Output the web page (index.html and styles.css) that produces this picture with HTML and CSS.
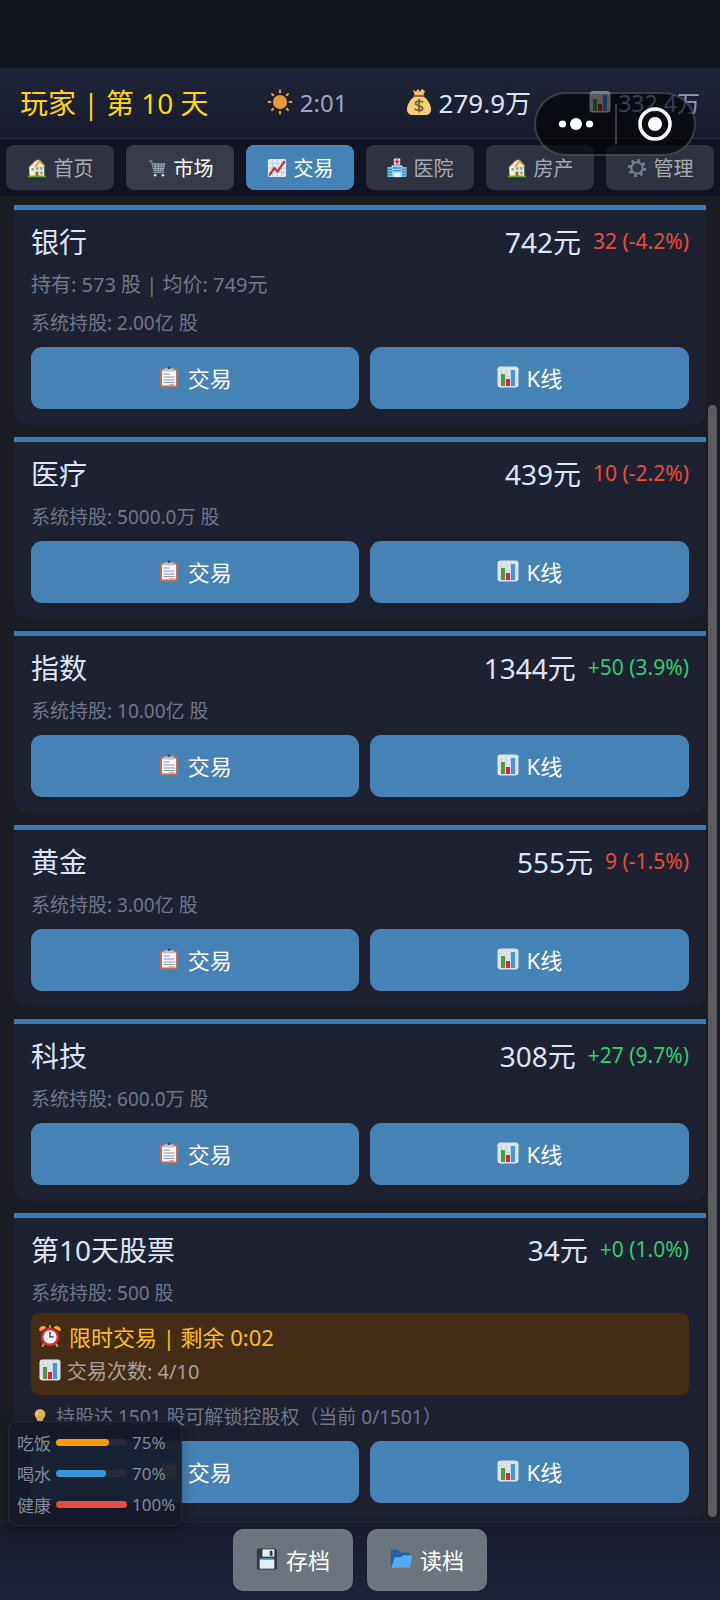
FILE: index.html
```html
<!DOCTYPE html>
<html lang="zh-CN">
<head>
<meta charset="utf-8">
<meta name="viewport" content="width=device-width, initial-scale=1">
<title>交易</title>
<link rel="stylesheet" href="styles.css">
</head>
<body>

<!-- icon sprite -->
<svg class="sprite" aria-hidden="true">
  <symbol id="i-sun" viewBox="0 0 26 26">
    <circle cx="13" cy="13" r="7" fill="#e59a35"/>
    <g stroke="#e59a35" stroke-width="2" stroke-linecap="round">
      <path d="M13 1.500v2M13 22.500v2M1.500 13h2M22.500 13h2M5 5l1.300 1.300M19.700 19.700l1.300 1.300M5 21l1.300-1.300M19.700 6.300L21 5"/>
    </g>
  </symbol>
  <symbol id="i-bag" viewBox="0 0 26 28">
    <path d="M7 2l3 1.500L12 1l2 2.500L16 1l3 2-2 5H9z" fill="#f2c063"/>
    <path d="M9 8h8c4 3 8 8 8 13 0 4-2 6-6 6H7c-4 0-6-2-6-6C1 16 5 11 9 8z" fill="#f7cf78"/>
    <path d="M8.500 8h9" stroke="#a8622c" stroke-width="2" stroke-linecap="round"/>
    <path d="M17 14.500c-1-1.500-7-2.500-7.500.6-.3 3.400 7.500 2 7.200 5.300-.3 3-6.700 2.500-7.900.4M13 11v13.500" fill="none" stroke="#70613c" stroke-width="1.800"/>
  </symbol>
  <symbol id="i-bars" viewBox="0 0 22 22">
    <rect x=".5" y=".5" width="21" height="21" rx="3" fill="#dfe6ea"/>
    <path d="M4.500 1v20M9 1v20M13.500 1v20M18 1v20M1 6h20M1 11h20M1 16h20" stroke="#c2d0d8" stroke-width=".7"/>
    <rect x="4" y="8" width="4" height="12" fill="#4f9a3c"/>
    <rect x="9" y="13" width="4" height="7" fill="#d8263f"/>
    <rect x="14" y="4" width="4" height="16" fill="#4794dc"/>
  </symbol>
  <symbol id="i-chart" viewBox="0 0 22 22">
    <rect x="1" y="1" width="20" height="20" rx="2" fill="#e4ebf0"/>
    <path d="M6 1v20M11 1v20M16 1v20M1 6h20M1 11h20M1 16h20" stroke="#b9c9d6" stroke-width=".8"/>
    <path d="M3 18.500l5-7.500 3.500 4L19 4" fill="none" stroke="#d8263f" stroke-width="2.400" stroke-linejoin="round" stroke-linecap="round"/>
  </symbol>
  <symbol id="i-house" viewBox="0 0 22 22">
    <path d="M3 10l9-8.500L19 9v11H3z" fill="#f8e7b0"/>
    <path d="M2.500 10.500L10 3l2 1.500L7 11v9H3z" fill="#fff3cc"/>
    <path d="M8.500 10L14 2.800l5.500 6" fill="none" stroke="#d39746" stroke-width="1.500"/>
    <path d="M2 10.500L9.500 3" stroke="#cfa362" stroke-width="1.200"/>
    <rect x="5" y="11" width="2.500" height="3" fill="#62aecb"/>
    <rect x="10" y="10" width="2.500" height="3" fill="#62aecb"/>
    <rect x="14.500" y="10" width="2.500" height="3" fill="#62aecb"/>
    <rect x="14.500" y="15" width="2.500" height="3" fill="#62aecb"/>
    <rect x="9.500" y="15" width="3" height="5" fill="#9a6b3c"/>
    <path d="M1 20.300h20" stroke="#6d9c3c" stroke-width="1.800"/>
  </symbol>
  <symbol id="i-cart" viewBox="0 0 22 22">
    <path d="M2 3.500h3L8 16h11" fill="none" stroke="#8494a0" stroke-width="1.500"/>
    <path d="M5.500 6H20l-2 8H7.500z" fill="#4a5966"/>
    <path d="M5.500 6.500H20M6 9h13.500M6.500 11.500H19M8 14h10.500M9 6l.8 8M12.500 6v8M16 6l-.8 8M19.500 6l-2 8" stroke="#a8b6c0" stroke-width=".9"/>
    <circle cx="9" cy="19" r="1.400" fill="#dfe5ea"/>
    <circle cx="17.500" cy="19" r="1.400" fill="#dfe5ea"/>
  </symbol>
  <symbol id="i-hospital" viewBox="0 0 22 22">
    <path d="M5 8h12v13H5z" fill="#a9dcf5"/>
    <path d="M.5 10H6v11H.5zM16 10h5.500v11H16z" fill="#7cc0ea"/>
    <path d="M1 12.500h4.500M1 15.500h4.500M1 18.500h4.500M16.500 12.500H21M16.500 15.500H21M16.500 18.500H21M6.500 11h9M6.500 14h9" stroke="#3b87c4" stroke-width="1.400"/>
    <rect x="8" y="16.500" width="6" height="4.500" fill="#e9f4fa"/>
    <rect x="7.500" y=".5" width="7" height="7" rx="1" fill="#e8e5ea"/>
    <path d="M11 1.500v5M8.500 4h5" stroke="#d12f45" stroke-width="1.800"/>
  </symbol>
  <symbol id="i-gear" viewBox="0 0 22 22">
    <circle cx="11" cy="11" r="8.500" fill="none" stroke="#71808c" stroke-width="3" stroke-dasharray="3.200 3.475"/>
    <circle cx="11" cy="11" r="6.300" fill="none" stroke="#71808c" stroke-width="2.400"/>
  </symbol>
  <symbol id="i-clip" viewBox="0 0 22 22">
    <rect x="2" y="2.500" width="18" height="19" rx="2" fill="#bf6f58"/>
    <path d="M4 4.500h14v15H4z" fill="#f5f5f8"/>
    <path d="M6 2.500h3.500a1.600 1.600 0 0 1 3 0H16v3H6z" fill="#b4c3cf"/>
    <path d="M11 .5v2.500" stroke="#39424c" stroke-width="1.800"/>
    <path d="M5.500 8h6M5.500 11h11M5.500 14h11M5.500 16.500h11" stroke="#8a9cad" stroke-width="1"/>
    <path d="M11 18.700h5" stroke="#d98e78" stroke-width="1"/>
  </symbol>
  <symbol id="i-alarm" viewBox="0 0 24 24">
    <path d="M1 7a4 4 0 0 1 7-4zM23 7a4 4 0 0 0-7-4z" fill="#eca83c"/>
    <path d="M6 20l-2 3M18 20l2 3M12 1v3" stroke="#d9a05a" stroke-width="2" stroke-linecap="round"/>
    <circle cx="12" cy="13" r="10" fill="#d42a3d"/>
    <circle cx="12" cy="13" r="7.300" fill="#f6f2f2"/>
    <path d="M12 7.500V13h4" fill="none" stroke="#333" stroke-width="1.500"/>
  </symbol>
  <symbol id="i-bulb" viewBox="0 0 20 20">
    <path d="M10 1a6 6 0 0 0-6 6c0 3 3 5 3.200 8h5.600C13 12 16 10 16 7a6 6 0 0 0-6-6z" fill="#dcb25a"/>
    <path d="M8 5c-1.500 1-1.500 2-1.200 3.500" stroke="#f2dc9a" stroke-width="1.500" fill="none"/>
    <path d="M7.500 15.500h5v2.500l-1.500 1.500H9L7.500 18z" fill="#7a7d86"/>
  </symbol>
  <symbol id="i-disk" viewBox="0 0 24 24">
    <path d="M2 .5h19l2 2V22a1.500 1.500 0 0 1-1.500 1.500h-19A1.500 1.500 0 0 1 1 22V1.500z" fill="#303840"/>
    <rect x="7" y="1.500" width="13" height="8" fill="#e3e9ee"/>
    <rect x="15" y="3" width="3" height="5.500" rx="1" fill="#303840"/>
    <rect x="4" y="12.500" width="16" height="10" fill="#e6eef6"/>
    <path d="M4 12h16" stroke="#50a4e6" stroke-width="1.800"/>
  </symbol>
  <symbol id="i-folder" viewBox="0 0 24 24">
    <path d="M1 3.500Q1 2 2.500 2H8l3.500 3H20q2 0 2 2v4L2 21H1z" fill="#1f669f"/>
    <path d="M4.500 11.500Q5 10 6.500 10H11l4-2h7.500q1.500 0 1.300 1.500l-1.300 10q-.3 2-2 2H1.500z" fill="#55a9f0"/>
  </symbol>
</svg>

<div class="app">
  <div class="statusbar"></div>

  <header class="header">
    <h1 class="player">玩家 | 第 10 天</h1>
    <div class="stat time"><svg class="icon big"><use href="#i-sun"/></svg>2:01</div>
    <div class="stat money"><svg class="icon big"><use href="#i-bag"/></svg>279.9万</div>
    <div class="stat total"><svg class="icon"><use href="#i-bars"/></svg>332.4万</div>
  </header>

  <nav class="tabs">
    <button class="tab"><svg class="icon"><use href="#i-house"/></svg>首页</button>
    <button class="tab lit"><svg class="icon"><use href="#i-cart"/></svg>市场</button>
    <button class="tab active"><svg class="icon"><use href="#i-chart"/></svg>交易</button>
    <button class="tab"><svg class="icon"><use href="#i-hospital"/></svg>医院</button>
    <button class="tab"><svg class="icon"><use href="#i-house"/></svg>房产</button>
    <button class="tab"><svg class="icon"><use href="#i-gear"/></svg>管理</button>
  </nav>

  <main class="list">
    <section class="card">
      <div class="top"><h2>银行</h2><span class="price">742元</span><span class="change down">32 (-4.2%)</span></div>
      <p class="own">持有: 573 股 | 均价: 749元</p>
      <p class="sys">系统持股: 2.00亿 股</p>
      <div class="actions">
        <button class="btn"><svg class="icon"><use href="#i-clip"/></svg>交易</button>
        <button class="btn"><svg class="icon"><use href="#i-bars"/></svg>K线</button>
      </div>
    </section>

    <section class="card">
      <div class="top"><h2>医疗</h2><span class="price">439元</span><span class="change down">10 (-2.2%)</span></div>
      <p class="sys">系统持股: 5000.0万 股</p>
      <div class="actions">
        <button class="btn"><svg class="icon"><use href="#i-clip"/></svg>交易</button>
        <button class="btn"><svg class="icon"><use href="#i-bars"/></svg>K线</button>
      </div>
    </section>

    <section class="card">
      <div class="top"><h2>指数</h2><span class="price">1344元</span><span class="change up">+50 (3.9%)</span></div>
      <p class="sys">系统持股: 10.00亿 股</p>
      <div class="actions">
        <button class="btn"><svg class="icon"><use href="#i-clip"/></svg>交易</button>
        <button class="btn"><svg class="icon"><use href="#i-bars"/></svg>K线</button>
      </div>
    </section>

    <section class="card">
      <div class="top"><h2>黄金</h2><span class="price">555元</span><span class="change down">9 (-1.5%)</span></div>
      <p class="sys">系统持股: 3.00亿 股</p>
      <div class="actions">
        <button class="btn"><svg class="icon"><use href="#i-clip"/></svg>交易</button>
        <button class="btn"><svg class="icon"><use href="#i-bars"/></svg>K线</button>
      </div>
    </section>

    <section class="card">
      <div class="top"><h2>科技</h2><span class="price">308元</span><span class="change up">+27 (9.7%)</span></div>
      <p class="sys">系统持股: 600.0万 股</p>
      <div class="actions">
        <button class="btn"><svg class="icon"><use href="#i-clip"/></svg>交易</button>
        <button class="btn"><svg class="icon"><use href="#i-bars"/></svg>K线</button>
      </div>
    </section>

    <section class="card">
      <div class="top"><h2>第10天股票</h2><span class="price">34元</span><span class="change up">+0 (1.0%)</span></div>
      <p class="sys">系统持股: 500 股</p>
      <div class="limit">
        <p class="limit-time"><svg class="icon"><use href="#i-alarm"/></svg>限时交易 | 剩余 0:02</p>
        <p class="limit-count"><svg class="icon"><use href="#i-bars"/></svg>交易次数: 4/10</p>
      </div>
      <p class="hint"><svg class="icon"><use href="#i-bulb"/></svg>持股达 1501 股可解锁控股权（当前 0/1501）</p>
      <div class="actions">
        <button class="btn"><svg class="icon"><use href="#i-clip"/></svg>交易</button>
        <button class="btn"><svg class="icon"><use href="#i-bars"/></svg>K线</button>
      </div>
    </section>
    <div class="scrollbar"></div>
  </main>

  <footer class="footer">
    <button class="save"><svg class="icon"><use href="#i-disk"/></svg>存档</button>
    <button class="save"><svg class="icon"><use href="#i-folder"/></svg>读档</button>
  </footer>

  <!-- floating player needs -->
  <div class="needs">
    <div class="need"><span>吃饭</span><div class="bar"><div class="fill food" style="width:75%"></div></div><span>75%</span></div>
    <div class="need"><span>喝水</span><div class="bar"><div class="fill water" style="width:70%"></div></div><span>70%</span></div>
    <div class="need"><span>健康</span><div class="bar"><div class="fill health" style="width:100%"></div></div><span>100%</span></div>
  </div>

  <!-- mini program capsule -->
  <div class="capsule">
    <button class="cap-btn" aria-label="更多">
      <svg width="36" height="14" viewBox="0 0 36 14" fill="#fff"><circle cx="4.500" cy="7" r="3.600"/><circle cx="18" cy="7" r="6"/><circle cx="31.500" cy="7" r="3.600"/></svg>
    </button>
    <button class="cap-btn" aria-label="关闭">
      <svg width="36" height="36" viewBox="0 0 36 36"><circle cx="18" cy="18" r="15" fill="none" stroke="#fff" stroke-width="3.600"/><circle cx="18" cy="18" r="7" fill="#fff"/></svg>
    </button>
  </div>
</div>

</body>
</html>
```

FILE: styles.css
```css
* { box-sizing: border-box; }

body {
  margin: 0;
  background: #1c1c24;
  color: #dfe3f8;
  font-family: "Noto Sans", "Noto Sans CJK SC", sans-serif;
  font-size: 20px;
}

h1, h2, p { margin: 0; font-weight: normal; }

button {
  border: 0;
  padding: 0;
  font-family: inherit;
  color: #fff;
}

.sprite { position: absolute; width: 0; height: 0; }

.icon { width: 22px; height: 22px; flex: none; }
.icon.big { width: 26px; height: 28px; }

.app {
  position: relative;
  min-height: 100vh;
  display: flex;
  flex-direction: column;
}

.statusbar { height: 68px; background: #12161f; }

.header {
  display: flex;
  justify-content: space-between;
  align-items: center;
  height: 71px;
  padding: 0 20px 2px;
  background: linear-gradient(#1f2438, #181c2c);
  border-bottom: 1px solid #2a2e3c;
}
.player { font-size: 28px; color: #ffd60a; }
.stat { display: flex; align-items: center; gap: 7px; font-size: 24px; }
.time { color: #a0a4bc; }
.money { font-size: 26px; }
.total { font-size: 23px; color: #8e9ac0; }

.tabs {
  display: flex;
  gap: 12px;
  padding: 6px;
  background: #101423;
}
.tab {
  flex: 1;
  display: flex;
  align-items: center;
  justify-content: center;
  gap: 7px;
  height: 45px;
  border-radius: 8px;
  background: #2e3241;
  color: #a8a9ae;
  font-size: 20px;
}
.tab .icon { width: 20px; height: 20px; }
.tab.lit { background: #383b49; color: #fff; }
.tab.active { background: #4682b4; color: #fff; }

.list {
  position: relative;
  flex: 1;
  display: flex;
  flex-direction: column;
  gap: 12px;
  padding: 9px 14px 0;
}

.card {
  padding: 13px 17px 16px;
  border-top: 5px solid #3579b5;
  border-radius: 0 0 14px 14px;
  background: #1d2130;
}
.top {
  display: flex;
  align-items: center;
  height: 36px;
  margin-bottom: 11px;
}
.top h2 { flex: 1; font-size: 28px; }
.price { font-size: 28px; }
.change { margin-left: 12px; font-size: 21px; }
.up { color: #2ecc71; }
.down { color: #e74c3c; }

.own, .sys, .hint { line-height: 30px; color: #717688; }
.own { font-size: 20px; margin-bottom: 8px; }
.sys { font-size: 19px; margin-bottom: 9px; }

.actions { display: flex; gap: 11px; }
.btn {
  flex: 1 1 auto;
  display: flex;
  align-items: center;
  justify-content: center;
  gap: 8px;
  height: 62px;
  padding-bottom: 3px;
  border-radius: 11px;
  background: #4682b4;
  font-size: 22px;
}

.limit {
  margin: -4px 0 7px;
  padding: 6px 8px 8px;
  border-radius: 8px;
  background: #452d15;
}
.limit p { display: flex; align-items: center; gap: 8px; height: 34px; }
.limit .limit-time { font-size: 22px; color: #fbbf24; }
.limit .limit-count { gap: 6px; font-size: 20px; color: #a5a09e; }
.hint {
  display: flex;
  align-items: center;
  gap: 7px;
  margin-bottom: 9px;
  font-size: 19px;
}
.hint .icon { width: 18px; height: 18px; }

.scrollbar {
  position: absolute;
  top: 209px;
  right: 3px;
  bottom: 4px;
  width: 9px;
  border-radius: 5px;
  background: #5a5a5f;
}

.footer {
  display: flex;
  justify-content: center;
  gap: 14px;
  padding: 7px 0 9px;
  border-top: 1px solid #25293a;
  background: linear-gradient(#181c2c, #1e2338);
}
.save {
  display: flex;
  align-items: center;
  justify-content: center;
  gap: 8px;
  width: 120px;
  height: 62px;
  padding-bottom: 3px;
  border-radius: 10px;
  background: #6c757d;
  font-size: 22px;
}

.needs {
  position: absolute;
  left: 8px;
  bottom: 74px;
  width: 174px;
  padding: 5px 8px;
  border: 1px solid #262a3a;
  border-radius: 8px;
  background: rgba(22, 26, 40, .92);
  box-shadow: 0 4px 12px rgba(0, 0, 0, .3);
}
.need {
  display: flex;
  align-items: center;
  gap: 5px;
  height: 31px;
  font-size: 17px;
  white-space: nowrap;
  color: #83889a;
}
.bar {
  flex: none;
  width: 71px;
  height: 7px;
  border-radius: 4px;
  background: #272b39;
}
.fill { height: 100%; border-radius: 4px; }
.food { background: #f39c12; }
.water { background: #3498db; }
.health { background: #e74c3c; }

.capsule {
  position: absolute;
  top: 92px;
  right: 24px;
  display: flex;
  width: 162px;
  height: 64px;
  border: 2px solid rgba(255, 255, 255, .2);
  border-radius: 32px;
  background: rgba(0, 0, 0, .6);
}
.cap-btn {
  flex: 1;
  display: flex;
  align-items: center;
  justify-content: center;
  background: none;
}
.cap-btn + .cap-btn::before {
  content: "";
  position: absolute;
  left: 50%;
  width: 2px;
  height: 40px;
  background: rgba(255, 255, 255, .2);
}
```
